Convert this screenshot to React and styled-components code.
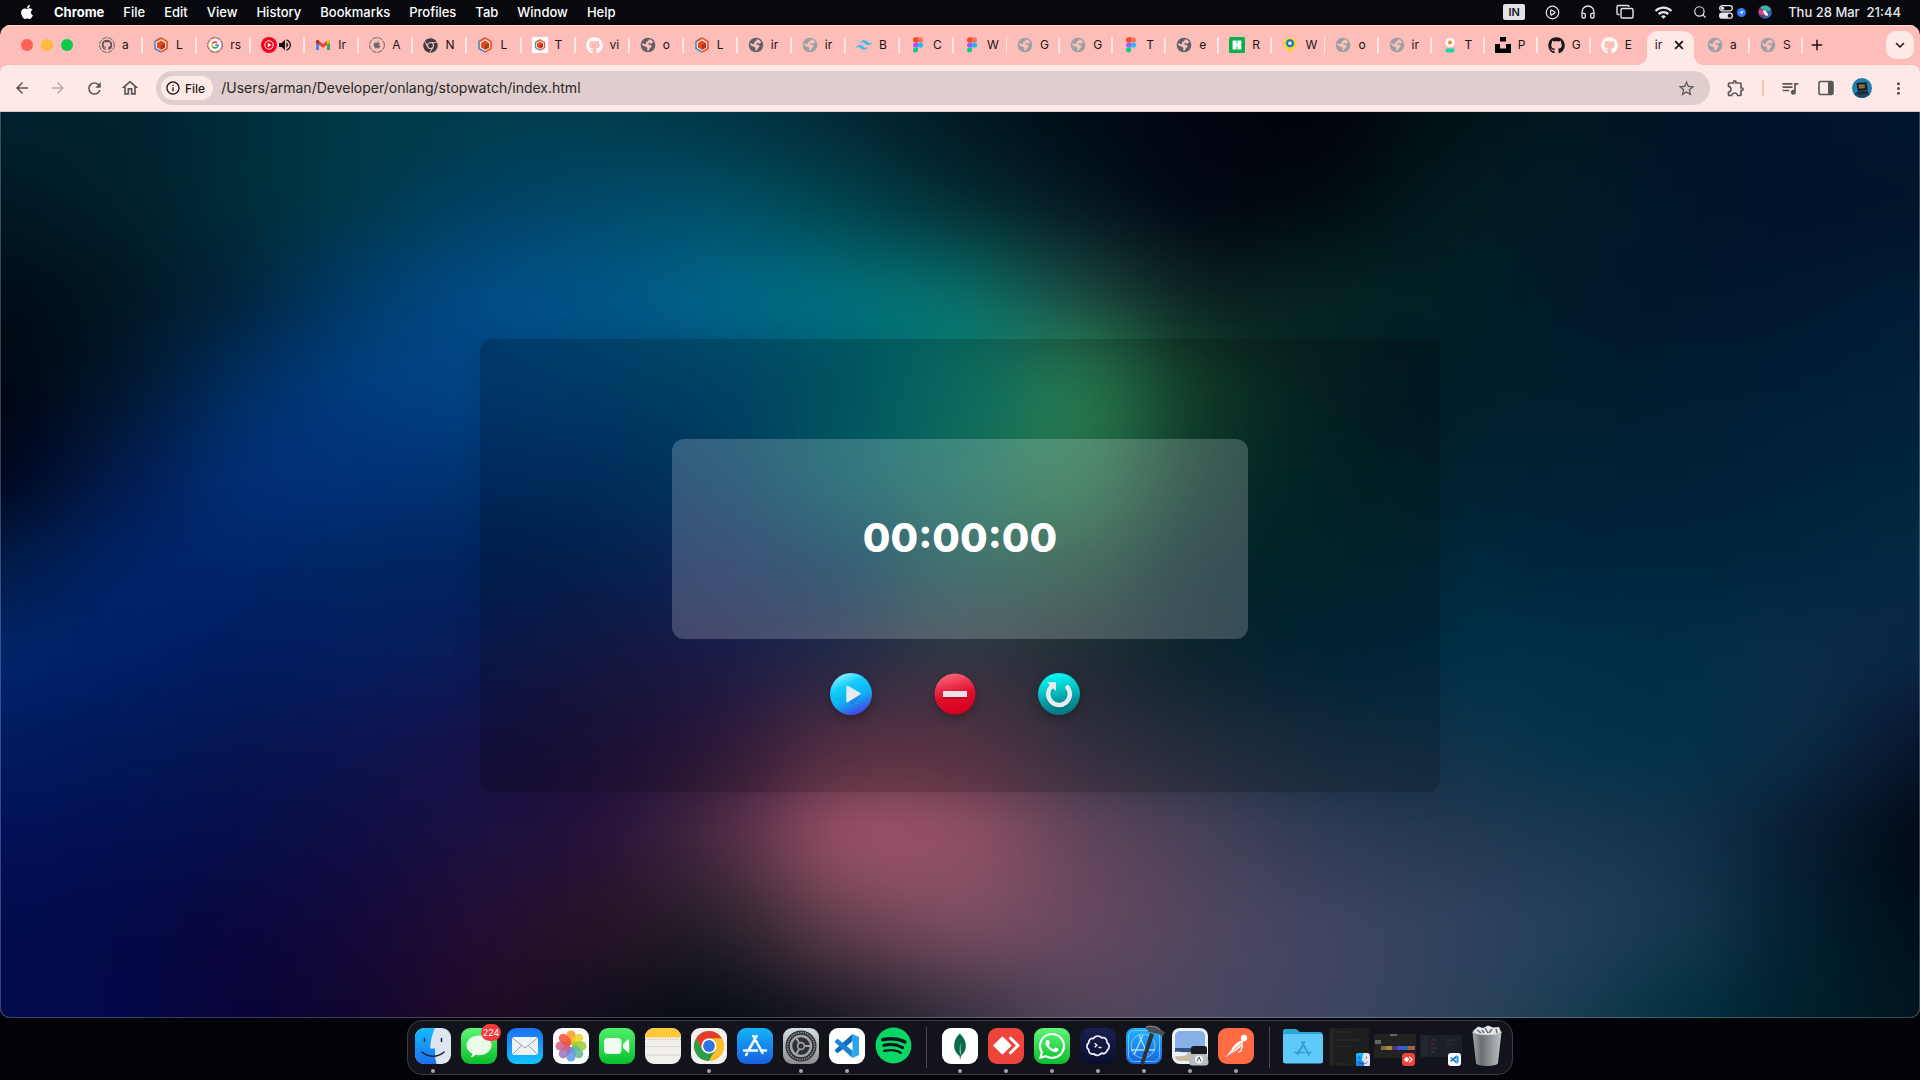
import React from "react";
import styled, { createGlobalStyle, css } from "styled-components";
import { FaApple, FaGithub, FaChrome, FaWhatsapp, FaSpotify } from "react-icons/fa";
import { SiMongodb, SiAnydesk, SiTailwindcss, SiUnsplash } from "react-icons/si";
import {
  MdArrowBack,
  MdArrowForward,
  MdRefresh,
  MdOutlineHome,
  MdStarBorder,
  MdOutlineExtension,
  MdQueueMusic,
  MdMoreVert,
  MdAdd,
  MdKeyboardArrowDown,
  MdVolumeUp,
  MdOutlineInfo,
  MdWifi,
} from "react-icons/md";
import { Headphones, Search, CirclePlay } from "lucide-react";

const Global = createGlobalStyle`
  *, *::before, *::after { box-sizing: border-box; }
  html, body { margin: 0; }
  body {
    background: #020308;
    font-family: Inter, Roboto, "Liberation Sans", sans-serif;
    overflow: hidden;
  }
  button { font: inherit; color: inherit; border: 0; padding: 0; background: none; cursor: default; }
  svg { display: block; flex: none; }
`;

const Desktop = styled.div`
  display: flex;
  flex-direction: column;
  height: 100vh;
`;

/* ---------- menu bar ---------- */

const MenuBar = styled.header`
  display: flex;
  justify-content: space-between;
  align-items: center;
  height: 24px;
  margin-bottom: 1px;
  padding: 0 19px 0 19px;
  background: #08090f;
  color: #fff;
  font-size: 13px;
  line-height: 24px;
`;

const MenuList = styled.nav`
  display: flex;
  align-items: center;
  gap: 19px;
`;

const MenuItem = styled.button`
  font-weight: ${(p) => (p.$strong ? 700 : 500)};
`;

const StatusList = styled.div`
  display: flex;
  align-items: center;
  color: #e6e6ea;
  gap: ${(p) => p.$gap}px;
`;

const InputSource = styled.button`
  width: 22px;
  height: 16px;
  border-radius: 2px;
  background: #e2e3e6;
  color: #15161c;
  font-size: 11px;
  font-weight: 600;
  line-height: 16px;
`;

const Clock = styled.time`
  margin-left: 4px;
  font-weight: 500;
  white-space: pre;
`;

/* ---------- browser window ---------- */

const Window = styled.section`
  flex: 1;
  min-height: 0;
  display: flex;
  flex-direction: column;
  border-radius: 10px;
  overflow: hidden;
  background: #fdbdb8;
`;

const TabStrip = styled.div`
  display: flex;
  align-items: center;
  height: 40px;
  padding: 0 6px 0 21px;
  box-shadow: inset 0 1px 0 #fedcd9;
`;

const Lights = styled.div`
  display: flex;
  gap: 8px;
  width: 68px;
`;

const Light = styled.button`
  width: 12px;
  height: 12px;
  border-radius: 50%;
  background: ${(p) => p.$color};
`;

const Tabs = styled.div`
  display: grid;
  grid-template-columns: repeat(16, 54fr) repeat(16, 53fr);
  flex: 1;
  height: 40px;
`;

const activeTab = css`
  margin: 6px 3px 0;
  padding-left: 8px;
  gap: 10px;
  background: #fee9e6;
  border-radius: 10px 10px 0 0;
  &::before,
  &::after {
    content: "";
    position: absolute;
    bottom: 0;
    width: 10px;
    height: 10px;
  }
  &::before {
    left: -10px;
    background: radial-gradient(circle at 0 0, transparent 10px, #fee9e6 10px);
  }
  &::after {
    right: -10px;
    background: radial-gradient(circle at 100% 0, transparent 10px, #fee9e6 10px);
  }
`;

const restingTab = css`
  padding-left: 10px;
  gap: 7px;
  &::after {
    content: "";
    width: 2px;
    height: 16px;
    margin-left: auto;
    background: ${(p) => (p.$divider ? "#fee9e6" : "transparent")};
  }
`;

const Tab = styled.button`
  position: relative;
  display: flex;
  align-items: center;
  min-width: 0;
  padding-bottom: ${(p) => (p.$active ? 6 : 0)}px;
  color: #1c1414;
  ${(p) => (p.$active ? activeTab : restingTab)}
`;

const TabTitle = styled.span`
  white-space: nowrap;
  text-align: left;
  font-size: 12px;
  line-height: 16px;
`;

const StripButton = styled.button`
  display: grid;
  place-items: center;
  width: 28px;
  height: 28px;
  border-radius: 10px;
  color: #1c1414;
  background: ${(p) => (p.$filled ? "#fee9e6" : "transparent")};
`;

const StripGap = styled.div`
  width: 55px;
`;

const Toolbar = styled.div`
  display: flex;
  align-items: center;
  height: 47px;
  padding: 0 4px 0 8px;
  border-radius: 8px 8px 0 0;
  border-bottom: 1px solid #dccaca;
  background: #fee9e6;
  color: #5b5759;
`;

const ToolButton = styled.button`
  display: grid;
  place-items: center;
  width: ${(p) => p.$width || 36}px;
  height: 34px;
  color: ${(p) => (p.$faded ? "#b9abab" : "#5b5759")};
`;

const AddressBar = styled.form`
  display: flex;
  align-items: center;
  flex: 1;
  height: 34px;
  margin: 0 8px 0 4px;
  padding: 0 14px 0 5px;
  border-radius: 17px;
  background: #dfcecd;
`;

const SchemeChip = styled.button`
  display: flex;
  align-items: center;
  gap: 4px;
  height: 24px;
  padding: 0 8px 0 4px;
  border-radius: 12px;
  background: #fee9e6;
  color: #1f1a1b;
  font-size: 12px;
  font-weight: 500;
`;

const AddressInput = styled.input`
  flex: 1;
  min-width: 0;
  margin-left: 8px;
  padding: 0;
  border: 0;
  outline: 0;
  background: none;
  color: #2a2526;
  font: 400 14px/20px Inter, Roboto, sans-serif;
`;

const ToolDivider = styled.span`
  width: 2px;
  height: 16px;
  margin: 0 8px;
  background: #fdbdb8;
`;

/* ---------- stopwatch page ---------- */

const Page = styled.main`
  position: relative;
  flex: 1;
  min-height: 0;
  display: flex;
  align-items: center;
  justify-content: center;
  overflow: hidden;
  border-radius: 0 0 10px 10px;
  background: #00101e;
  &::after {
    content: "";
    position: absolute;
    inset: 0;
    border: 1px solid rgba(255, 255, 255, 0.22);
    border-top: 0;
    border-radius: 0 0 10px 10px;
    pointer-events: none;
  }
`;

const Backdrop = styled.svg`
  position: absolute;
  inset: 0;
  width: 100%;
  height: 100%;
`;

const Card = styled.section`
  position: relative;
  display: flex;
  flex-direction: column;
  align-items: center;
  width: 50%;
  height: 50%;
  padding-top: 100px;
  border-radius: 12px;
  background: rgba(0, 0, 0, 0.2);
  box-shadow: 0 4px 30px rgba(0, 0, 0, 0.1);
`;

const Display = styled.div`
  display: flex;
  align-items: center;
  justify-content: center;
  width: 60%;
  height: 200px;
  border-radius: 12px;
  background: rgba(255, 255, 255, 0.2);
`;

const Time = styled.h1`
  margin: 0;
  padding-bottom: 2px;
  color: #fff;
  font-size: 40px;
  line-height: 48px;
  font-weight: 800;
`;

const Controls = styled.div`
  display: flex;
  gap: 60px;
  margin-top: 33px;
  padding-right: 10px;
`;

const RoundButton = styled.button`
  width: 44px;
  height: 44px;
  border-radius: 50%;
  filter: drop-shadow(0 4px 4px rgba(0, 0, 0, 0.25));
`;

/* ---------- dock ---------- */

const DockArea = styled.footer`
  display: flex;
  justify-content: center;
  padding: 2px 0 5px;
  background: #020308;
`;

const Dock = styled.div`
  display: flex;
  align-items: center;
  height: 55px;
  padding: 0 2px;
  border: 1px solid #3c3d43;
  border-radius: 15px;
  background: #13141b;
`;

const DockItem = styled.button`
  position: relative;
  display: grid;
  place-items: center;
  width: 46px;
  height: 53px;
  padding-bottom: 4px;
  &::after {
    content: "";
    position: absolute;
    left: 21px;
    bottom: 1px;
    width: 4px;
    height: 4px;
    border-radius: 50%;
    background: ${(p) => (p.$running ? "#a3a4a9" : "transparent")};
  }
`;

const Tile = styled.span`
  display: grid;
  place-items: center;
  width: 36px;
  height: 36px;
  border-radius: 9px;
  overflow: hidden;
  background: ${(p) => p.$fill || "none"};
  color: ${(p) => p.$ink || "#fff"};
`;

const Badge = styled.span`
  position: absolute;
  top: 3px;
  right: 1px;
  min-width: 20px;
  height: 17px;
  border-radius: 9px;
  background: #f33b3e;
  color: #fff;
  font-size: 9px;
  line-height: 17px;
`;

const DockDivider = styled.span`
  width: 1px;
  height: 41px;
  margin: 0 10px;
  background: #4a4b52;
`;

/* ---------- aurora mesh ---------- */

const MESH = [
  "00202f 00202d 002d3a 003a48 003d4d 003d4d 003445 052734 001723 000c16 020410 010008 001213 001720 001125 00132b 00182f",
  "001824 001f2c 002e38 00394a 004062 004969 005066 00434c 052a32 03151d 000510 000a0e 011a1f 001c26 00152a 001028 001328",
  "000c17 001520 01233a 003c6c 004d88 005788 00668a 00727e 07726b 1c473e 0a1c1e 04231f 002025 00192a 00152a 001830 001c36",
  "000612 001528 002e64 003f80 004585 004a80 00527a 006478 0a8679 34a066 15482f 052628 001c28 001d2c 001c30 001c36 002038",
  "000418 011a4c 033078 00327a 003470 003872 004677 006e7a 178672 36965e 0e4034 00292a 00222f 002033 001f34 00223c 00253f",
  "001b45 00246a 002469 002560 00235f 042860 14306f 01406c 17675f 215f46 082d35 002c33 002a3c 00253f 00263f 002640 042a44",
  "02266c 002069 001c60 051e60 0a1c58 191c50 20215a 2c3358 434352 2a3440 0d2b3a 002a42 003048 002e49 002d48 0a2d4b 0a2548",
  "001a60 001858 04144f 0c134f 161048 1e1240 341c45 6c3a4f 6c3d52 3f3b4e 2a374b 19344b 12344d 03324c 00304a 0c2d48 08132a",
  "021058 020f50 060e4a 0f0d42 1a1040 25113a 4c2b40 a4566b 985266 644559 48415a 303b55 253850 1b3850 14334d 071b30 000814",
  "000c4c 040848 0a073c 14083a 220d32 291425 222028 65404f 7f4f64 6a495f 504660 424562 334460 25405c 163a50 001f30 000f18",
  "000c4c 04084a 090538 10062e 200b25 0e0e1a 020911 141621 302f3c 51455a 484660 3e4460 30435c 1a3d52 003040 00202c 001420",
].map((row) => row.split(" "));

const CELL_W = 120;
const CELL_H = 90;

function Aurora() {
  const rows = MESH.length;
  const cols = MESH[0].length;
  const cells = [];
  for (let r = -1; r <= rows; r += 1) {
    for (let c = -1; c <= cols; c += 1) {
      const row = MESH[Math.min(rows - 1, Math.max(0, r))];
      const color = row[Math.min(cols - 1, Math.max(0, c))];
      cells.push(
        <rect
          key={`${r}:${c}`}
          x={(c - 0.5) * CELL_W}
          y={(r - 0.5) * CELL_H}
          width={CELL_W + 1}
          height={CELL_H + 1}
          fill={`#${color}`}
        />
      );
    }
  }
  return (
    <Backdrop viewBox="0 0 1920 900" preserveAspectRatio="none" aria-hidden="true">
      <filter id="soften" filterUnits="userSpaceOnUse" x="-180" y="-135" width="2280" height="1170" colorInterpolationFilters="sRGB">
        <feGaussianBlur stdDeviation="50 38" />
      </filter>
      <g filter="url(#soften)">{cells}</g>
    </Backdrop>
  );
}

/* ---------- favicons ---------- */

const Globe = ({ color }) => (
  <svg width="16" height="16" viewBox="0 0 16 16">
    <circle cx="8" cy="8" r="7.300" fill={color} />
    <path
      d="M9.500 2.200c1.600.4 3 1.500 3.800 3-.8.300-1.300 1.300-2.300 1.500-.9.200-1.100-.7-2-.6-.8.100-.8 1-.2 1.400 1 .6 2.400.300 2.800 1.500.3 1.200-1.100 1.500-1.700 2.300-.5.700-.4 1.700-1.300 2.300-.9.300-1.500-.3-1.400-1.200.1-.8.400-1.400-.2-2-.7-.7-1.900-.5-2.700-1.100L2.200 8c0-.7.1-1.300.3-1.900 1.100.3 1.800 1.300 2.900 1.100.9-.2.500-1.200.9-1.900.4-.6 1.300-.6 1.700-1.200.3-.6.7-1.500 1.500-1.900Z"
      fill="#fdbdb8"
    />
  </svg>
);
const GlobeDark = () => <Globe color="#5f6368" />;
const GlobeLight = () => <Globe color="#9aa0a6" />;

const Ring = ({ children }) => (
  <svg width="16" height="16" viewBox="0 0 16 16">
    <circle cx="8" cy="8" r="7.400" fill="none" stroke="#6d6466" strokeWidth="1" strokeDasharray="5 1" />
    {children}
  </svg>
);

const RingGithub = () => (
  <Ring><FaGithub x="2.500" y="2.500" size={11} color="#5c5658" /></Ring>
);
const RingApple = () => (
  <Ring><FaApple x="3.500" y="3" size={9} color="#6f6b6d" /></Ring>
);
const RingGoogle = () => (
  <Ring>
    <circle cx="8" cy="8" r="6" fill="#fff" />
    <g fill="none" strokeWidth="1.600">
      <path d="M10.200 6A3 3 0 0 0 5.400 6.600" stroke="#ea4335" />
      <path d="M5.400 6.600A3 3 0 0 0 5.400 9.400" stroke="#fbbc05" />
      <path d="M5.400 9.400A3 3 0 0 0 10.100 10.100" stroke="#34a853" />
      <path d="M10.100 10.100A3 3 0 0 0 11 8H8.100" stroke="#4285f4" />
    </g>
  </Ring>
);

const Cube = ({ boxed }) => (
  <svg width="16" height="16" viewBox="0 0 16 16">
    {boxed && <path fill="#fff" d="M0 0h16v16H0z" />}
    <g transform={boxed ? "translate(2 2) scale(.75)" : undefined}>
      <path d="M8 .8 14 4.300V11.700L8 15.200 2 11.700V4.300Z" fill="#fbe3dd" />
      <path d="M8 1 14 4.400V11.600L8 15" fill="none" stroke="#e8582c" strokeWidth="1.700" />
      <path d="M8 1 2 4.400V11.600L8 15" fill="none" stroke="#4f8fc0" strokeWidth="1.700" />
      <path d="M8 1 3 3.900" fill="none" stroke="#e8582c" strokeWidth="1.700" />
      <path d="M8 3.600 12 5.900V10.400L8 12.700 4 10.400V5.900Z" fill="#e04a20" />
      <path d="M8 8.200V12.700L12 10.400V5.900Z" fill="#b9331a" />
    </g>
  </svg>
);
const CubePlain = () => <Cube />;
const CubeBoxed = () => <Cube boxed />;

const Figma = () => (
  <svg width="16" height="16" viewBox="0 0 16 16">
    <path d="M3 2.900A2.600 2.600 0 0 1 5.600.3H8v5.200H5.600A2.600 2.600 0 0 1 3 2.900Z" fill="#f24e1e" />
    <path d="M8 .3h2.400a2.600 2.600 0 0 1 0 5.200H8Z" fill="#ff7262" />
    <path d="M3 8a2.600 2.600 0 0 1 2.600-2.600H8v5.200H5.600A2.600 2.600 0 0 1 3 8Z" fill="#a259ff" />
    <circle cx="10.500" cy="8" r="2.600" fill="#1abcfe" />
    <path d="M3 13.100a2.600 2.600 0 0 1 2.600-2.600H8v2.600a2.500 2.500 0 0 1-5 0Z" fill="#0acf83" />
  </svg>
);

const Gmail = () => (
  <svg width="16" height="16" viewBox="0 0 16 16">
    <path d="M1 4.600V13h3V6.800Z" fill="#4285f4" />
    <path d="M15 4.600V13h-3V6.800Z" fill="#34a853" />
    <path d="M4 4v3.800l4 3 4-3V4L8 7Z" fill="#ea4335" />
    <path d="M1 4.400C1 3 2.700 2.400 4 3.600v4.200L1 5.600Z" fill="#c5221f" />
    <path d="M15 4.400c0-1.400-1.700-2-3-.8v4.200l3-2.200Z" fill="#fbbc04" />
  </svg>
);

const Audible = () => (
  <svg width="31" height="16" viewBox="0 0 31 16">
    <circle cx="8" cy="8" r="8" fill="#f5001f" />
    <circle cx="8" cy="8" r="4.200" fill="none" stroke="#fff" strokeWidth="1" />
    <path d="M6.800 5.800 10.400 8 6.800 10.200Z" fill="#fff" />
    <MdVolumeUp x="16" y="0" size={16} color="#1c1414" />
  </svg>
);

const ChromeMono = () => <FaChrome size={15} color="#3d3f43" />;
const GithubWhite = () => <FaGithub size={17} color="#fff" />;
const GithubBlack = () => <FaGithub size={17} color="#16181b" />;
const Tailwind = () => <SiTailwindcss size={16} color="#38bdf8" />;
const Unsplash = () => <SiUnsplash size={16} color="#000" />;

const GreenBlocks = () => (
  <svg width="16" height="16" viewBox="0 0 16 16">
    <rect width="16" height="16" rx="1.600" fill="#06b14b" />
    <path d="M3.600 3.600h4v3.200h.8V3.600h4v3.600l-.8.800.8.800v3.600H8.400V9.200h-.8v3.200h-4Z" fill="#fff" />
  </svg>
);

const MapPin = () => (
  <svg width="16" height="16" viewBox="0 0 16 16">
    <path d="M8 .4c3.800 0 6.400 2.500 6.400 5.800 0 4-4 6.600-6.400 9.400C5.600 12.800 1.600 10.200 1.600 6.200 1.600 2.900 4.200.4 8 .4Z" fill="#fbd12b" />
    <circle cx="8" cy="6.200" r="4" fill="#1380b8" />
    <circle cx="8" cy="6.200" r="1.700" fill="#fff" />
  </svg>
);

const Person = () => (
  <svg width="16" height="16" viewBox="0 0 16 16">
    <circle cx="8" cy="5.600" r="4.600" fill="#fff" />
    <circle cx="8" cy="5.600" r="2" fill="#ff8a1e" />
    <path d="M3.600 11.400h8.800v2a2 2 0 0 1-2 2H5.600a2 2 0 0 1-2-2Z" fill="#12d3b0" />
  </svg>
);

const CloseMark = () => (
  <svg width="14" height="14" viewBox="0 0 14 14" fill="none" stroke="currentColor" strokeWidth="1.800">
    <path d="M3.200 3.200 10.800 10.800M10.800 3.200 3.200 10.800" />
  </svg>
);

const TABS = [
  [RingGithub, "a"], [CubePlain, "L"], [RingGoogle, "rs"], [Audible, ""], [Gmail, "Ir"],
  [RingApple, "A"], [ChromeMono, "N"], [CubePlain, "L"], [CubeBoxed, "T"], [GithubWhite, "vi"],
  [GlobeDark, "o"], [CubePlain, "L"], [GlobeDark, "ir"], [GlobeLight, "ir"], [Tailwind, "B"],
  [Figma, "C"], [Figma, "W"], [GlobeLight, "G"], [GlobeLight, "G"], [Figma, "T"],
  [GlobeDark, "e"], [GreenBlocks, "R"], [MapPin, "W"], [GlobeLight, "o"], [GlobeLight, "ir"],
  [Person, "T"], [Unsplash, "P"], [GithubBlack, "G"], [GithubWhite, "E"], [null, "ir"],
  [GlobeLight, "a"], [GlobeLight, "S"],
];

/* ---------- status icons ---------- */

const Windows = () => (
  <svg width="18" height="16" viewBox="0 0 18 16" fill="none" stroke="currentColor" strokeWidth="1.400">
    <rect x="5" y="4.500" width="12" height="9.500" rx="1.500" />
    <path d="M3.500 10.500H2.200A1.200 1.200 0 0 1 1 9.300V3A1.500 1.500 0 0 1 2.500 1.500h9A1.500 1.500 0 0 1 13 3" />
  </svg>
);

const Toggles = () => (
  <svg width="14" height="14" viewBox="0 0 14 14">
    <rect x=".7" y=".7" width="12.600" height="5.200" rx="2.600" fill="none" stroke="currentColor" strokeWidth="1.300" />
    <circle cx="3.500" cy="3.300" r="1.700" fill="currentColor" />
    <rect y="7.600" width="14" height="6.200" rx="3.100" fill="currentColor" />
    <circle cx="10.700" cy="10.700" r="2" fill="#08090f" />
  </svg>
);

const Locator = () => (
  <svg width="9" height="9" viewBox="0 0 9 9">
    <circle cx="4.500" cy="4.500" r="4.500" fill="#3478f6" />
    <path d="M2.200 4.500 6.600 2.400 4.600 6.800 4.200 4.800Z" fill="#fff" />
  </svg>
);

const Siri = () => (
  <svg width="14" height="14" viewBox="0 0 14 14">
    <defs>
      <linearGradient id="siri" x1="0" y1="0" x2="1" y2="1">
        <stop offset="0" stopColor="#d0417f" />
        <stop offset=".5" stopColor="#4b3f78" />
        <stop offset="1" stopColor="#2a7fe0" />
      </linearGradient>
    </defs>
    <circle cx="7" cy="7" r="6.800" fill="url(#siri)" />
    <path d="M2.500 2.500C5-.3 11-.2 13.200 4.500 11 7.500 5.500 6 2.500 2.500Z" fill="#2fb9a6" />
    <path d="M.4 6C2 4.500 5 5 6.500 7.500 5 11.500 1.500 11 .4 6Z" fill="#e9416f" />
    <path d="M5 5.500c2.500-.8 4.300 1.500 5.200 5C7.500 11.500 5.500 9.500 5 5.500Z" fill="#f0f4ff" />
  </svg>
);

const SidePanel = () => (
  <svg width="16" height="16" viewBox="0 0 16 16">
    <rect x="1" y="1.500" width="14" height="13" rx="1.400" fill="none" stroke="currentColor" strokeWidth="1.600" />
    <path d="M10 2h5v12h-5Z" fill="currentColor" />
  </svg>
);

const Avatar = () => (
  <svg width="20" height="20" viewBox="0 0 20 20">
    <circle cx="10" cy="10" r="10" fill="#1f7fae" />
    <path d="M2 16a10 10 0 0 0 16 0l-3-2H4Z" fill="#184c69" />
    <path d="M4.500 5 14.500 4.200 15.500 12 5.800 13Z" fill="#15181c" />
    <path d="M6.200 6.200 12.800 5.700 13.400 10.400 7 11Z" fill="#5a4a25" />
    <path d="M5 13.500 15.500 12.500 16.500 15.500 6.500 17Z" fill="#24292e" />
    <path d="M7 7.600h5.600M7.200 9.300h5.600" stroke="#d79d35" strokeWidth=".7" />
  </svg>
);

/* ---------- stopwatch buttons ---------- */

const PlayGlyph = () => (
  <svg width="44" height="44" viewBox="0 0 44 44">
    <defs>
      <linearGradient id="play" x1=".3" y1="0" x2=".75" y2="1">
        <stop offset="0" stopColor="#8ff2ff" />
        <stop offset=".28" stopColor="#12cdfb" />
        <stop offset=".6" stopColor="#10aef2" />
        <stop offset="1" stopColor="#4a35e2" />
      </linearGradient>
      <linearGradient id="pearl" x1="0" y1="0" x2="0" y2="1">
        <stop offset="0" stopColor="#d9e6ea" />
        <stop offset="1" stopColor="#eef0f5" />
      </linearGradient>
    </defs>
    <circle cx="22" cy="22" r="21" fill="url(#play)" />
    <path d="M18 15.500 32 24 22 34Z" fill="#1b5fd0" opacity=".35" />
    <path d="M17.300 14.200c0-.7.700-1 1.300-.7l12.700 7.600c.6.400.6 1.200 0 1.500l-12.700 7.700c-.6.400-1.300 0-1.300-.7Z" fill="url(#pearl)" />
  </svg>
);

const StopGlyph = () => (
  <svg width="44" height="44" viewBox="0 0 44 44">
    <defs>
      <linearGradient id="stop" x1=".35" y1="0" x2=".6" y2="1">
        <stop offset="0" stopColor="#f5677b" />
        <stop offset=".35" stopColor="#e82a45" />
        <stop offset=".55" stopColor="#e00d2b" />
        <stop offset="1" stopColor="#d40020" />
      </linearGradient>
    </defs>
    <circle cx="22" cy="22" r="20.500" fill="url(#stop)" />
    <rect x="10" y="21" width="24" height="6" fill="#9c0018" opacity=".45" />
    <rect x="10" y="19" width="24" height="6" rx=".5" fill="#e4e4e6" />
  </svg>
);

const ResetGlyph = () => (
  <svg width="44" height="44" viewBox="0 0 44 44">
    <defs>
      <linearGradient id="reset" x1=".4" y1="0" x2=".6" y2="1">
        <stop offset="0" stopColor="#06fbf8" />
        <stop offset=".4" stopColor="#06c3c6" />
        <stop offset=".7" stopColor="#03929b" />
        <stop offset="1" stopColor="#037580" />
      </linearGradient>
    </defs>
    <circle cx="22" cy="22" r="21" fill="url(#reset)" />
    <g fill="none" stroke="#026d77" strokeWidth="4.500" opacity=".45" transform="translate(0 2)">
      <path d="M14.500 14.500A10.800 10.800 0 1 0 30.500 15.500" />
    </g>
    <path d="M14.500 14.500A10.800 10.800 0 1 0 30.500 15.500" fill="none" stroke="#e9edf1" strokeWidth="4.500" strokeLinecap="round" />
    <path d="M10.200 10.300h8.800v8.800Z" fill="#e9edf1" />
  </svg>
);

/* ---------- dock icons ---------- */

const FinderArt = ({ size = 36 }) => (
  <svg width={size} height={size} viewBox="0 0 36 36">
    <defs>
      <linearGradient id="finderL" x1="0" y1="0" x2="0" y2="1">
        <stop offset="0" stopColor="#12bdfc" />
        <stop offset="1" stopColor="#1c6ff0" />
      </linearGradient>
    </defs>
    <rect width="36" height="36" rx="8" fill="#dfe5ee" />
    <path d="M8 0H20C17 6 15.500 13 15.200 20.500H20C19.800 26 20.300 31 21.500 36H8A8 8 0 0 1 0 28V8A8 8 0 0 1 8 0Z" fill="url(#finderL)" />
    <path d="M9.500 10.500v3M26.500 10.500v3M7 24c6 5.600 16 5.600 22 0" fill="none" stroke="#15263c" strokeWidth="1.500" strokeLinecap="round" />
  </svg>
);

const MessagesArt = () => (
  <svg width="36" height="36" viewBox="0 0 36 36">
    <path d="M18 7.500c7 0 12.500 4.300 12.500 9.800S25 27.200 18 27.200c-1.200 0-2.300-.1-3.400-.4-1.300 1.400-3 2.300-5 2.400 1-1 1.500-2.200 1.500-3.600-3.400-1.800-5.600-4.800-5.600-8.300 0-5.500 5.500-9.800 12.500-9.800Z" fill="#eafbe9" />
  </svg>
);

const MailArt = () => (
  <svg width="26" height="18" viewBox="0 0 26 18">
    <rect width="26" height="18" rx="2.500" fill="#f0f3f6" />
    <path d="M1 1.500 13 11 25 1.500M1 17l8.500-8.500M25 17l-8.500-8.500" fill="none" stroke="#8fa3b5" strokeWidth="1" />
  </svg>
);

const PETALS = ["#fb9a20", "#e9d51f", "#9acc3c", "#5fb98d", "#5c9be0", "#9c72c2", "#d1618c", "#f2503c"];
const PhotosArt = () => (
  <svg width="36" height="36" viewBox="0 0 36 36">
    {PETALS.map((fill, i) => (
      <rect key={fill} x="13.500" y="2.500" width="9" height="14.500" rx="4.500" fill={fill} opacity=".86" transform={`rotate(${i * 45} 18 18)`} />
    ))}
  </svg>
);

const FaceTimeArt = () => (
  <svg width="26" height="18" viewBox="0 0 26 18" fill="#effcf0">
    <rect y="1" width="17.500" height="16" rx="4" />
    <path d="M19 7 24 2.500c.6-.5 1.200-.2 1.200.5V15c0 .7-.6 1-1.200.5L19 11Z" />
  </svg>
);

const NotesArt = () => (
  <svg width="36" height="36" viewBox="0 0 36 36">
    <path d="M0 0h36v36H0Z" fill="#f2f0ec" />
    <path d="M0 0h36v9.500H0Z" fill="#fdc93a" />
    <path d="M0 11.500h36" stroke="#b9b6b0" strokeDasharray="1 1.500" />
    <path d="M0 18.500h36M0 27h36" stroke="#dad7d1" />
  </svg>
);

const ChromeArt = () => (
  <svg width="32" height="32" viewBox="0 0 32 32">
    <circle cx="16" cy="16" r="15" fill="#f9bc1b" />
    <path d="M16 1A15 15 0 0 1 29 8.500H16A7.500 7.500 0 0 0 9.500 19.800L3 8.500A15 15 0 0 1 16 1Z" fill="#e33b2e" />
    <path d="M3 8.500 9.500 19.800A7.500 7.500 0 0 0 16 23.500L22.500 19.800 16 31A15 15 0 0 1 3 8.500Z" fill="#2c9d4b" />
    <path d="M22.500 19.800 16 31A15 15 0 0 0 29 8.500H16A7.500 7.500 0 0 1 22.500 19.800Z" fill="#fbc02b" />
    <circle cx="16" cy="16" r="7.500" fill="#fff" />
    <circle cx="16" cy="16" r="5.900" fill="#2f74e5" />
  </svg>
);

const StoreArt = () => (
  <svg width="26" height="26" viewBox="0 0 26 26" fill="none" stroke="#f4f9ff" strokeWidth="2.600" strokeLinecap="round">
    <path d="M14.600 3 6.500 17.500M11.400 3 20.500 20M2 17.500H15M19.500 17.500H24M5 20.500 4.200 22" />
  </svg>
);

const SettingsArt = () => (
  <svg width="36" height="36" viewBox="0 0 36 36">
    <defs>
      <linearGradient id="metal" x1="0" y1="0" x2="0" y2="1">
        <stop offset="0" stopColor="#d3dde3" />
        <stop offset="1" stopColor="#8c8c8e" />
      </linearGradient>
    </defs>
    <path d="M0 0h36v36H0Z" fill="url(#metal)" />
    <circle cx="18" cy="18" r="15.500" fill="#2f3133" />
    <circle cx="18" cy="18" r="13.500" fill="none" stroke="#8d8f92" strokeWidth="1.600" strokeDasharray="1.400 1" />
    <circle cx="18" cy="18" r="10" fill="none" stroke="#a1a3a6" strokeWidth="2.400" />
    <circle cx="18" cy="18" r="3.400" fill="none" stroke="#a1a3a6" strokeWidth="1.600" />
    <path d="M21.500 18H28M16.200 15 13 9.400M16.200 21 13 26.600" stroke="#a1a3a6" strokeWidth="2" />
  </svg>
);

const CodeArt = ({ size = 26 }) => (
  <svg width={size} height={size} viewBox="0 0 26 26">
    <path d="M18.500 1 25 4v18l-6.500 3Z" fill="#2aa5f2" />
    <path d="M18.500 1 1.200 16.600c-.5.500-.5 1.200 0 1.700l1.600 1.400c.4.400 1 .4 1.500 0L18.500 8.200Z" fill="#0a6fbd" />
    <path d="M18.500 25 1.200 9.400c-.5-.5-.5-1.200 0-1.700l1.600-1.400c.4-.4 1-.4 1.500 0L18.500 17.800Z" fill="#1a86d3" />
  </svg>
);

const TermiusArt = () => (
  <svg width="26" height="26" viewBox="0 0 26 26" fill="none" stroke="#e9ecf6" strokeWidth="1.800" strokeLinejoin="round" strokeLinecap="round">
    <path d="M8.500 5.500C10 2.800 14.500 2.300 16.800 4.800c3.200-.6 5.700 1.700 5.200 4.700 2.800 2 2.700 5.800.2 7.700-.4 2.800-3.400 4-5.700 2.900-1.800 2.600-5.400 2.900-7.500.9-3 .7-5.600-1.400-5.300-4.200-2.400-1.900-2.300-5.400 0-7.100-.2-2.800 2.200-4.800 4.800-4.200Z" />
    <path d="m10 10.500 2 1.700-2 1.700M14 14.500h2" strokeWidth="1.400" />
  </svg>
);

const XcodeArt = () => (
  <svg width="42" height="42" viewBox="0 0 42 42">
    <defs>
      <linearGradient id="xcode" x1="0" y1="0" x2="0" y2="1">
        <stop offset="0" stopColor="#23b3f6" />
        <stop offset="1" stopColor="#1a62df" />
      </linearGradient>
    </defs>
    <rect x="3" y="3" width="36" height="36" rx="8" fill="url(#xcode)" />
    <rect x="5.500" y="5.500" width="31" height="31" rx="6" fill="none" stroke="#7fd0fb" strokeWidth=".8" />
    <g fill="none" stroke="#a4e0fd" strokeWidth="1.300">
      <path d="M20 10 11 30M16 10l9 20M8 25h24" />
      <circle cx="20" cy="21" r="12" strokeWidth=".7" />
    </g>
    <path d="M27 8 31 9.500 21 39c-.6 1.500-3.800 1-3.500-.8Z" fill="#2e3136" />
    <path d="M22 2C28-1 35 1 38 4.500l4 3-2.500 4-4-2.500L26 7Z" fill="#4b4e54" />
    <path d="M23 2C29 .3 34 2 37 5" fill="none" stroke="#90949a" strokeWidth=".9" />
  </svg>
);

const PreviewArt = () => (
  <svg width="40" height="40" viewBox="0 0 40 40">
    <rect x="2" y="2" width="36" height="36" rx="8" fill="#f1f1f2" />
    <path d="M5 10a5 5 0 0 1 5-5h20a5 5 0 0 1 5 5v12H5Z" fill="#86b0e6" />
    <path d="M5 22h30v5H5Z" fill="#2a5488" />
    <path d="M5 26h30v4a5 5 0 0 1-5 5H10a5 5 0 0 1-5-5Z" fill="#c9bba6" />
    <path d="M5 26c4-2 7 2 12 0v3c-5 1-8 2-12 1Z" fill="#eef3f7" />
    <rect x="21" y="20" width="16" height="9" rx="2.500" fill="#1a1b1e" />
    <path d="M21 28h16l1.500 8a3 3 0 0 1-3 3.500H22a3 3 0 0 1-3-3.500Z" fill="#b9bdc1" />
    <circle cx="29" cy="33.500" r="4" fill="#f2f3f4" />
    <path d="M27 35.500 29 31l2 4.500" fill="none" stroke="#55585c" />
  </svg>
);

const PostmanArt = () => (
  <svg width="36" height="36" viewBox="0 0 36 36">
    <circle cx="26" cy="10" r="3.200" fill="#fff" />
    <path d="M23.500 12.500C18.500 14 15 18 13 22.500L7 29.500l7-4.700c4.500-1.800 9-5 11.500-11Z" fill="#fff" />
    <path d="M24.500 16.500 23 23l-3 1.500" fill="none" stroke="#fff" strokeWidth="1.300" />
    <path d="M23.500 15 15.500 22.500" stroke="#ff6c37" strokeWidth=".9" />
  </svg>
);

const FolderArt = () => (
  <svg width="40" height="36" viewBox="0 0 40 36">
    <path d="M2 1h10c1.500 0 2.300.6 3.200 1.600L16.500 4H37a2.500 2.500 0 0 1 2.500 2.500V12H0V3a2 2 0 0 1 2-2Z" fill="#2ca5d8" />
    <path d="M0 8A2 2 0 0 1 2 6h36a2 2 0 0 1 2 2v25a2.500 2.500 0 0 1-2.500 2.500h-35A2.500 2.500 0 0 1 0 33Z" fill="#5fcaf9" />
    <path d="M21.500 14 14.500 26M19 14l7 13M12 24.500h9M24 24.500h4" fill="none" stroke="#2e9dce" strokeWidth="1.700" strokeLinecap="round" />
  </svg>
);

const TextWindowArt = () => (
  <svg width="42" height="40" viewBox="0 0 42 40">
    <path d="M1 2h40v38H1Z" fill="#1e1e1f" />
    <path d="M2 3h4v36H2Z" fill="#242525" />
    <path d="M8 6h14M8 14h24M8 20h18M8 38h12" stroke="#2b2c2d" />
    <svg x="28" y="27"><FinderArt size={14} /></svg>
  </svg>
);

const MediaWindowArt = () => (
  <svg width="42" height="40" viewBox="0 0 42 40">
    <path d="M0 8h42v24H0Z" fill="#222223" />
    <path d="M1 14h6v4H1Z" fill="#666" />
    <path d="M16 9h7" stroke="#aaa" />
    <path d="M7 20h5v4H7Z" fill="#7c6c38" />
    <path d="M12 20h6v4h-6Z" fill="#a8893b" />
    <path d="M18 20h5v4h-5Z" fill="#4e3a72" />
    <path d="M23 20h5v4h-5Z" fill="#5248e0" />
    <path d="M28 20h6v4h-6Z" fill="#2f66c4" />
    <path d="M34 20h7v4h-7Z" fill="#a85f42" />
    <rect x="28" y="27" width="13" height="13" rx="3.500" fill="#ef443b" />
    <path d="m29.800 33.500 2.800-2.800 2.800 2.800-2.800 2.800Z" fill="#fff" />
    <path d="m35.200 30.700 2.800 2.800-2.800 2.800" fill="none" stroke="#fff" strokeWidth="1.200" />
  </svg>
);

const EditorWindowArt = () => (
  <svg width="42" height="40" viewBox="0 0 42 40">
    <path d="M0 9h42v22H0Z" fill="#1d2029" />
    <path d="M1 10h7v20H1Z" fill="#222631" />
    <path d="M11 14h5M11 18h4M11 22h6M11 26h4" stroke="#58303c" />
    <path d="M26 14h8M26 18h5" stroke="#2c3442" />
    <rect x="28" y="27" width="13" height="13" rx="3" fill="#fff" />
    <svg x="30" y="29"><CodeArt size={9} /></svg>
  </svg>
);

const TrashArt = () => (
  <svg width="32" height="42" viewBox="0 0 32 42">
    <defs>
      <linearGradient id="bin" x1="0" y1="0" x2="1" y2="0">
        <stop offset="0" stopColor="#a6a9aa" />
        <stop offset=".3" stopColor="#6c6f70" />
        <stop offset=".6" stopColor="#8e9192" />
        <stop offset="1" stopColor="#bfc2c3" />
      </linearGradient>
    </defs>
    <path d="M2 6 7 1.500 12 3 17 .5 22 2.500 28 2l2 5-5 4H6Z" fill="#e5e6e8" />
    <path d="m6 5 4 3M14 3l3 5M21 4l-3 4M25 4l1 4" stroke="#6b5c58" strokeWidth="1.300" />
    <path d="m11 5 2 3" stroke="#4278c9" strokeWidth="1.500" />
    <path d="M1.500 7c5 3.500 24 3.500 29 0L27 38c-.3 4-21.700 4-22 0Z" fill="url(#bin)" />
    <path d="M1.500 7c5 3.500 24 3.500 29 0" fill="none" stroke="#d5d7d8" />
  </svg>
);

const APPS = [
  { name: "Finder", art: <FinderArt />, running: true },
  { name: "Messages", fill: "linear-gradient(#5df777,#0bbd29)", art: <MessagesArt />, badge: "224" },
  { name: "Mail", fill: "linear-gradient(#1d6ff2,#14c4fb)", art: <MailArt /> },
  { name: "Photos", fill: "#fbfbfb", art: <PhotosArt /> },
  { name: "FaceTime", fill: "linear-gradient(#4ff06c,#0abf2b)", art: <FaceTimeArt /> },
  { name: "Notes", art: <NotesArt /> },
  { name: "Chrome", fill: "#f1f1f1", art: <ChromeArt />, running: true },
  { name: "App Store", fill: "linear-gradient(#12b4f8,#1a5fe0)", art: <StoreArt /> },
  { name: "Settings", art: <SettingsArt />, running: true },
  { name: "Code", fill: "#fff", art: <CodeArt />, running: true },
  { name: "Spotify", bare: true, art: <FaSpotify size={37} color="#08d665" /> },
];

const MORE_APPS = [
  { name: "MongoDB", fill: "#fff", ink: "#0b6b47", art: <SiMongodb size={26} />, running: true },
  { name: "AnyDesk", fill: "#ef443b", art: <SiAnydesk size={27} />, running: true },
  { name: "WhatsApp", fill: "linear-gradient(#5ef777,#0cbd2e)", art: <FaWhatsapp size={30} />, running: true },
  { name: "Termius", fill: "linear-gradient(#1a2052,#0a0e2c)", art: <TermiusArt />, running: true },
  { name: "Xcode", bare: true, art: <XcodeArt />, running: true },
  { name: "Preview", bare: true, art: <PreviewArt />, running: true },
  { name: "Postman", fill: "#ff6c43", art: <PostmanArt />, running: true },
];

const SHELF = [
  { name: "Applications", bare: true, art: <FolderArt /> },
  { name: "Finder window", bare: true, art: <TextWindowArt /> },
  { name: "AnyDesk window", bare: true, art: <MediaWindowArt /> },
  { name: "Code window", bare: true, art: <EditorWindowArt /> },
  { name: "Trash", bare: true, art: <TrashArt /> },
];

const renderApp = (app) => (
  <DockItem key={app.name} aria-label={app.name} $running={app.running}>
    {app.bare ? app.art : <Tile $fill={app.fill} $ink={app.ink}>{app.art}</Tile>}
    {app.badge && <Badge>{app.badge}</Badge>}
  </DockItem>
);

const MENUS = ["File", "Edit", "View", "History", "Bookmarks", "Profiles", "Tab", "Window", "Help"];

export default function App() {
  return (
    <Desktop>
      <Global />
      <MenuBar>
        <MenuList aria-label="Menu bar">
          <FaApple size={16} />
          <MenuItem $strong>Chrome</MenuItem>
          {MENUS.map((label) => (
            <MenuItem key={label}>{label}</MenuItem>
          ))}
        </MenuList>
        <StatusList $gap={12}>
          <StatusList $gap={20}>
            <InputSource>IN</InputSource>
            <CirclePlay size={15} />
            <Headphones size={16} />
            <Windows />
            <MdWifi size={19} />
            <Search size={14} />
          </StatusList>
          <StatusList $gap={4}>
            <Toggles />
            <Locator />
          </StatusList>
          <Siri />
          <Clock>{"Thu 28 Mar  21:44"}</Clock>
        </StatusList>
      </MenuBar>

      <Window>
        <TabStrip>
          <Lights>
            <Light $color="#ff5f57" aria-label="Close" />
            <Light $color="#febc3f" aria-label="Minimise" />
            <Light $color="#0bcb4b" aria-label="Zoom" />
          </Lights>
          <Tabs>
            {TABS.map(([Icon, title], i) => (
              <Tab key={i} $active={!Icon} $divider={i !== 28}>
                {Icon && <Icon />}
                {title && <TabTitle>{title}</TabTitle>}
                {!Icon && <CloseMark />}
              </Tab>
            ))}
          </Tabs>
          <StripButton aria-label="New tab"><MdAdd size={18} /></StripButton>
          <StripGap />
          <StripButton $filled aria-label="Search tabs"><MdKeyboardArrowDown size={18} /></StripButton>
        </TabStrip>

        <Toolbar>
          <ToolButton aria-label="Back" $width={28}><MdArrowBack size={18} /></ToolButton>
          <ToolButton aria-label="Forward" $width={44} $faded><MdArrowForward size={18} /></ToolButton>
          <ToolButton aria-label="Reload" $width={28}><MdRefresh size={19} /></ToolButton>
          <ToolButton aria-label="Home" $width={44}><MdOutlineHome size={20} /></ToolButton>
          <AddressBar>
            <SchemeChip type="button"><MdOutlineInfo size={16} />File</SchemeChip>
            <AddressInput aria-label="Address" readOnly value="/Users/arman/Developer/onlang/stopwatch/index.html" />
            <MdStarBorder size={19} />
          </AddressBar>
          <ToolButton aria-label="Extensions"><MdOutlineExtension size={20} /></ToolButton>
          <ToolDivider />
          <ToolButton aria-label="Media"><MdQueueMusic size={20} /></ToolButton>
          <ToolButton aria-label="Side panel"><SidePanel /></ToolButton>
          <ToolButton aria-label="Profile"><Avatar /></ToolButton>
          <ToolButton aria-label="More"><MdMoreVert size={19} /></ToolButton>
        </Toolbar>

        <Page>
          <Aurora />
          <Card>
            <Display>
              <Time>00:00:00</Time>
            </Display>
            <Controls>
              <RoundButton aria-label="Start"><PlayGlyph /></RoundButton>
              <RoundButton aria-label="Stop"><StopGlyph /></RoundButton>
              <RoundButton aria-label="Reset"><ResetGlyph /></RoundButton>
            </Controls>
          </Card>
        </Page>
      </Window>

      <DockArea>
        <Dock>
          {APPS.map(renderApp)}
          <DockDivider />
          {MORE_APPS.map(renderApp)}
          <DockDivider />
          {SHELF.map(renderApp)}
        </Dock>
      </DockArea>
    </Desktop>
  );
}
